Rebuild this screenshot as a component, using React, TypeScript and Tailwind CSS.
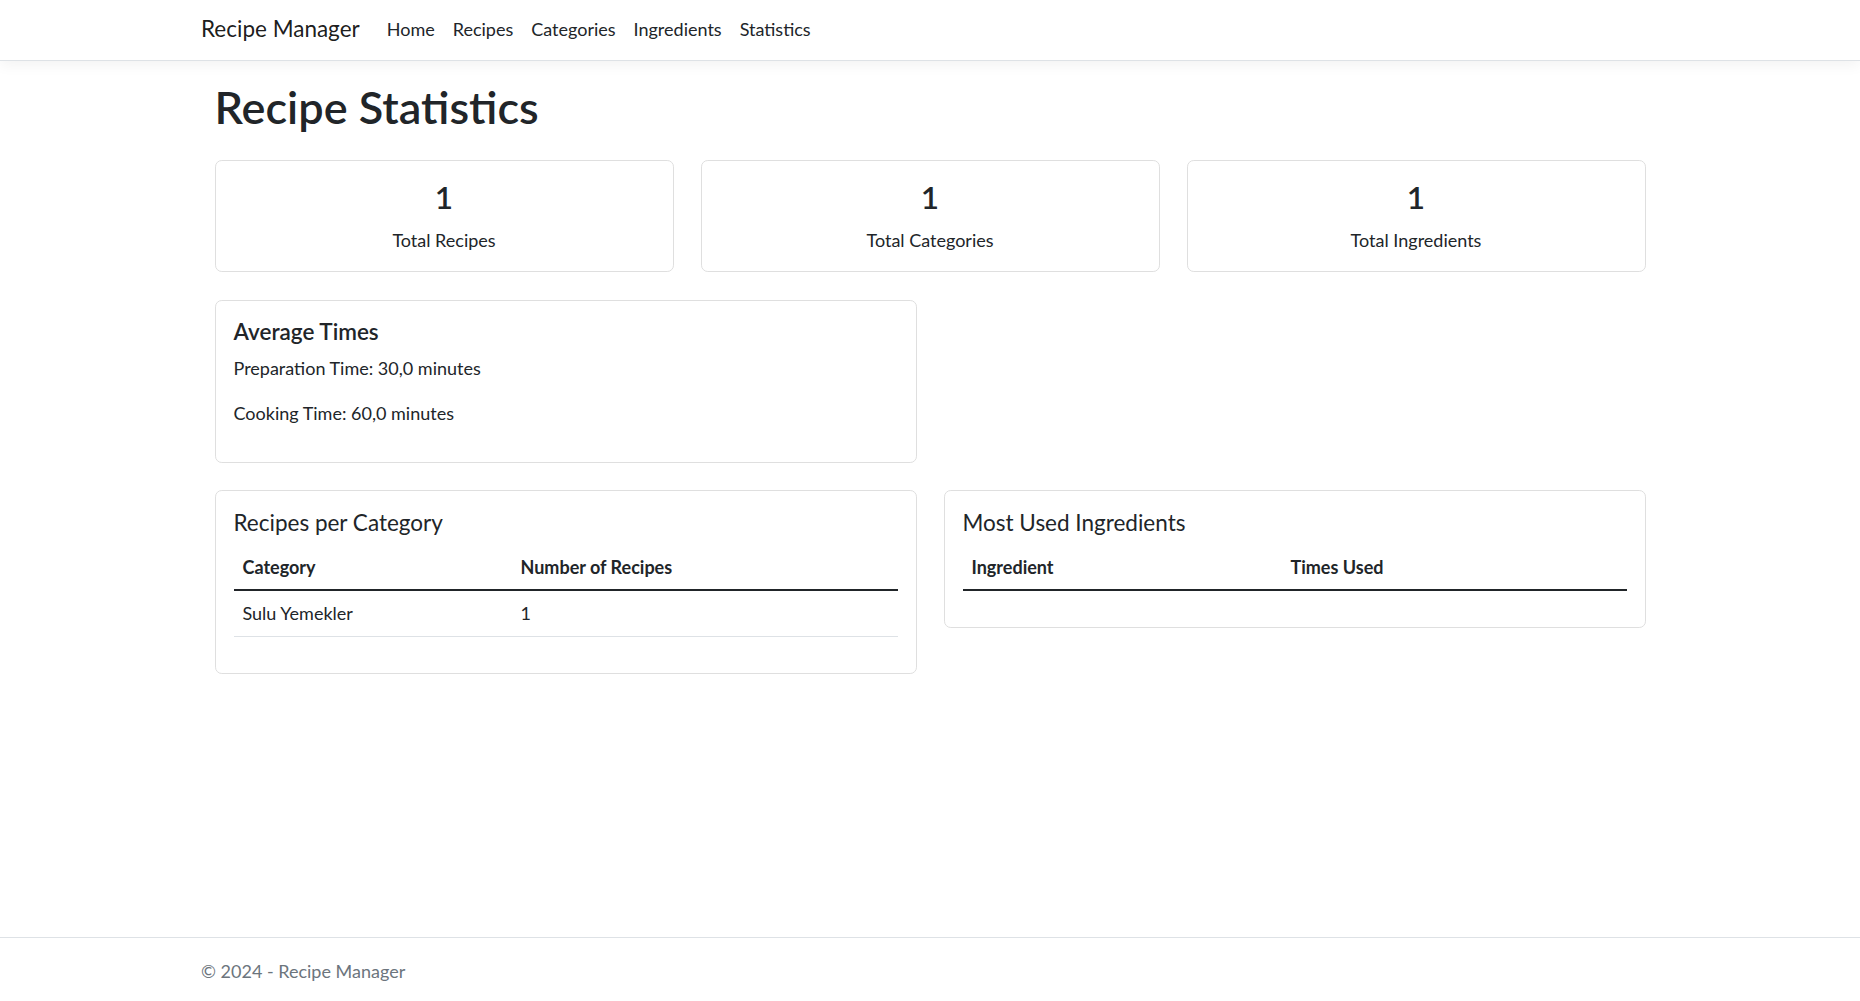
import React from "react";

const stats = [
  { value: "1", label: "Total Recipes" },
  { value: "1", label: "Total Categories" },
  { value: "1", label: "Total Ingredients" },
];

export default function App() {
  return (
    <div className="min-h-[1001px] flex flex-col bg-white text-[#212529] font-['Lato',_'Liberation_Sans',_sans-serif] text-[18px] leading-[27px]">
      <header className="h-[61px] shrink-0 bg-white border-b border-[#dee2e6] shadow-[0_4.5px_13.5px_rgba(0,0,0,0.05)]">
        <nav className="w-[1458px] mx-auto h-full flex items-center pb-[2px]">
          <a className="text-[22.5px] leading-[33.75px] text-black/90 mr-[18px]">Recipe Manager</a>
          <ul className="flex items-center">
            {["Home", "Recipes", "Categories", "Ingredients", "Statistics"].map((l) => (
              <li key={l}>
                <a className="px-[9px] text-[#212529]">{l}</a>
              </li>
            ))}
          </ul>
        </nav>
      </header>

      <main className="flex-1">
        <div className="w-[1431px] mx-auto pt-[19px]">
          <h1 className="text-[45px] leading-[54px] font-semibold mb-[26px]">Recipe Statistics</h1>

          <div className="grid grid-cols-3 gap-x-[27px]">
            {stats.map((s) => (
              <div key={s.label} className="border border-[#dfdfdf] rounded-[6.75px] px-[18px] pt-[18px] pb-[17px] text-center">
                <h3 className="text-[31.5px] leading-[37.8px] font-semibold mb-[10px]">{s.value}</h3>
                <p>{s.label}</p>
              </div>
            ))}
          </div>

          <div className="grid grid-cols-2 gap-x-[27px] mt-[28px]">
            <div className="border border-[#dfdfdf] rounded-[6.75px] px-[18px] pt-[17px] pb-[18px]">
              <h5 className="text-[22.5px] leading-[27px] font-semibold mb-[10px]">Average Times</h5>
              <p className="mb-[18px]">Preparation Time: 30,0 minutes</p>
              <p className="mb-[17px]">Cooking Time: 60,0 minutes</p>
            </div>
            <div />
          </div>

          <div className="grid grid-cols-2 gap-x-[27px] mt-[27px] items-start">
            <div className="border border-[#dfdfdf] rounded-[6.75px] p-[18px]">
              <h5 className="text-[22.5px] leading-[27px] font-normal mb-[8px]">Recipes per Category</h5>
              <table className="w-full border-collapse mb-[18px]">
                <thead>
                  <tr>
                    <th className="w-[278px] text-left font-bold px-[9px] pt-[10px] pb-[8px] border-b-2 border-[#212529]">Category</th>
                    <th className="text-left font-bold px-[9px] pt-[10px] pb-[8px] border-b-2 border-[#212529]">Number of Recipes</th>
                  </tr>
                </thead>
                <tbody>
                  <tr>
                    <td className="p-[9px] border-b border-[#dee2e6]">Sulu Yemekler</td>
                    <td className="p-[9px] border-b border-[#dee2e6]">1</td>
                  </tr>
                </tbody>
              </table>
            </div>
            <div className="border border-[#dfdfdf] rounded-[6.75px] p-[18px]">
              <h5 className="text-[22.5px] leading-[27px] font-normal mb-[8px]">Most Used Ingredients</h5>
              <table className="w-full border-collapse mb-[18px]">
                <thead>
                  <tr>
                    <th className="w-[319px] text-left font-bold px-[9px] pt-[10px] pb-[8px] border-b-2 border-[#212529]">Ingredient</th>
                    <th className="text-left font-bold px-[9px] pt-[10px] pb-[8px] border-b-2 border-[#212529]">Times Used</th>
                  </tr>
                </thead>
                <tbody></tbody>
              </table>
            </div>
          </div>
        </div>
      </main>

      <footer className="h-[64px] shrink-0 border-t border-[#dee2e6]">
        <div className="w-[1458px] mx-auto pt-[4px] leading-[59px] text-[#6c757d] whitespace-nowrap">© 2024 - Recipe Manager</div>
      </footer>
    </div>
  );
}
